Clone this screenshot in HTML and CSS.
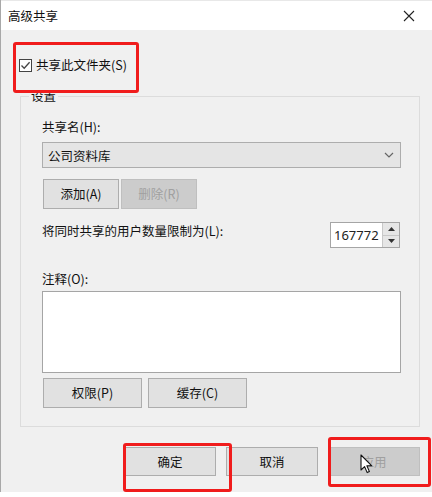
FILE: index.html
```html
<!DOCTYPE html>
<html lang="zh-CN">
<head>
<meta charset="utf-8">
<title>高级共享</title>
<link rel="stylesheet" href="styles.css">
</head>
<body>
<div class="window">
  <div class="titlebar">
    <span class="title">高级共享</span>
    <svg class="close" width="12" height="12" viewBox="0 0 12 12"><path d="M1 1 L11 11 M11 1 L1 11" stroke="#222" stroke-width="1.1" fill="none"/></svg>
  </div>
  <div class="content">
    <div class="check-row">
      <span class="checkbox"><svg width="11" height="11" viewBox="0 0 11 11"><path d="M1.5 5.5 L4.2 8.3 L9.6 2.2" stroke="#444" stroke-width="1.3" fill="none"/></svg></span>
      <span class="check-label">共享此文件夹(S)</span>
    </div>
    <div class="group">
      <span class="group-title">设置</span>
      <div class="label">共享名(H):</div>
      <div class="combo"><span>公司资料库</span><svg width="10" height="6" viewBox="0 0 10 6"><path d="M1 1 L5 5 L9 1" stroke="#666" stroke-width="1.2" fill="none"/></svg></div>
      <div class="btn-row tight">
        <div class="btn small">添加(A)</div>
        <div class="btn small disabled">删除(R)</div>
      </div>
      <div class="limit-row">
        <div class="label">将同时共享的用户数量限制为(L):</div>
        <div class="spin">
          <div class="spin-value">167772</div>
          <div class="spin-btns">
            <div class="spin-btn"><svg width="7" height="4" viewBox="0 0 7 4"><path d="M0 4 L3.5 0 L7 4 Z" fill="#333"/></svg></div>
            <div class="spin-btn"><svg width="7" height="4" viewBox="0 0 7 4"><path d="M0 0 L3.5 4 L7 0 Z" fill="#333"/></svg></div>
          </div>
        </div>
      </div>
      <div class="label comment-label">注释(O):</div>
      <div class="textarea"></div>
      <div class="btn-row wide">
        <div class="btn medium">权限(P)</div>
        <div class="btn medium">缓存(C)</div>
      </div>
    </div>
    <div class="footer">
      <div class="btn footer-btn">确定</div>
      <div class="btn footer-btn">取消</div>
      <div class="btn footer-btn disabled">应用</div>
    </div>
  </div>
  <div class="mark mark-1"></div>
  <div class="mark mark-2"></div>
  <div class="mark mark-3"></div>
  <svg class="cursor" width="14" height="21" viewBox="0 0 14 21"><path d="M1 1 L1 16 L4.6 12.6 L7.2 18.6 L9.4 17.6 L6.9 11.8 L11.8 11.8 Z" fill="#fff" stroke="#111" stroke-width="1.1" stroke-linejoin="round"/></svg>
</div>
</body>
</html>
```

FILE: styles.css
```css
* { box-sizing: border-box; }
html, body { margin: 0; padding: 0; background: #ffffff; }
body {
  font-family: "Noto Sans CJK SC", "Noto Sans", sans-serif;
  font-size: 12.5px;
  color: #111;
}
.window {
  position: relative;
  width: 432px;
  height: 492px;
  background: #f0f0f0;
  border-left: 1px solid #a8a8a8;
}
.titlebar {
  height: 30px;
  background: #ffffff;
  display: flex;
  align-items: center;
  justify-content: space-between;
  padding: 0 17px 0 7px;
  border-top: 1px solid #e8e8e8;
}
.title { font-size: 12.5px; line-height: 16px; color: #111; }
.close { display: block; }
.content { padding: 0; }
.check-row {
  display: flex;
  align-items: center;
  margin-top: 28px;
  margin-left: 18px;
  height: 14px;
}
.checkbox {
  width: 13px; height: 13px;
  border: 1px solid #444;
  background: #fff;
  display: flex; align-items: center; justify-content: center;
}
.check-label { margin-left: 4px; line-height: 16px; }
.group {
  position: relative;
  margin: 24px 12px 0 19px;
  border: 1px solid #dcdcdc;
  padding: 22px 18px 18px 21px;
}
.group-title {
  position: absolute;
  top: -9px; left: 8px;
  padding: 0 2px;
  background: #f0f0f0;
  line-height: 16px;
}
.label { line-height: 16px; }
.combo {
  margin-top: 7px;
  height: 26px;
  background: #e5e5e5;
  border: 1px solid #adadad;
  display: flex; align-items: center; justify-content: space-between;
  padding: 0 6px 0 5px;
}
.btn-row { display: flex; }
.btn-row.tight { margin-top: 11px; gap: 2px; padding-left: 1px; }
.btn-row.wide { margin-top: 5px; gap: 6px; padding-left: 1px; }
.btn {
  background: #e1e1e1;
  border: 1px solid #adadad;
  display: flex; align-items: center; justify-content: center;
  line-height: 16px;
}
.btn.disabled { background: #cccccc; border-color: #bfbfbf; color: #a0a0a0; }
.btn.small { width: 76px; height: 30px; }
.btn.medium { width: 99px; height: 30px; }
.limit-row {
  margin-top: 13px;
  display: flex;
  justify-content: space-between;
  align-items: flex-start;
}
.limit-row .label { padding-top: 1px; }
.spin {
  display: flex;
  height: 26px;
  margin-right: 1px;
  border: 1px solid #a5a5a5;
  background: #fff;
}
.spin-value {
  width: 51px;
  font-size: 13px;
  line-height: 24px;
  padding-left: 3px;
  color: #222;
  font-family: "Noto Sans", "Noto Sans CJK SC", sans-serif;
}
.spin-btns { display: flex; flex-direction: column; width: 17px; border-left: 1px solid #c8c8c8; }
.spin-btn {
  flex: 1;
  background: #e6e6e6;
  display: flex; align-items: center; justify-content: center;
}
.spin-btn + .spin-btn { border-top: 1px solid #c8c8c8; }
.comment-label { margin-top: 23px; }
.textarea {
  margin-top: 4px;
  height: 82px;
  background: #fff;
  border: 1px solid #a5a5a5;
}
.footer {
  display: flex;
  justify-content: flex-end;
  gap: 10px;
  margin: 20px 12px 0 0;
}
.footer-btn { width: 92px; height: 29px; }
.mark {
  position: absolute;
  border: 3px solid #f01c1c;
  border-radius: 3px;
}
.mark-1 { left: 12px; top: 42px; width: 126px; height: 51px; }
.mark-2 { left: 122px; top: 443px; width: 109px; height: 49px; }
.mark-3 { left: 327px; top: 437px; width: 103px; height: 50px; }
.cursor { position: absolute; left: 359px; top: 454px; }
```
